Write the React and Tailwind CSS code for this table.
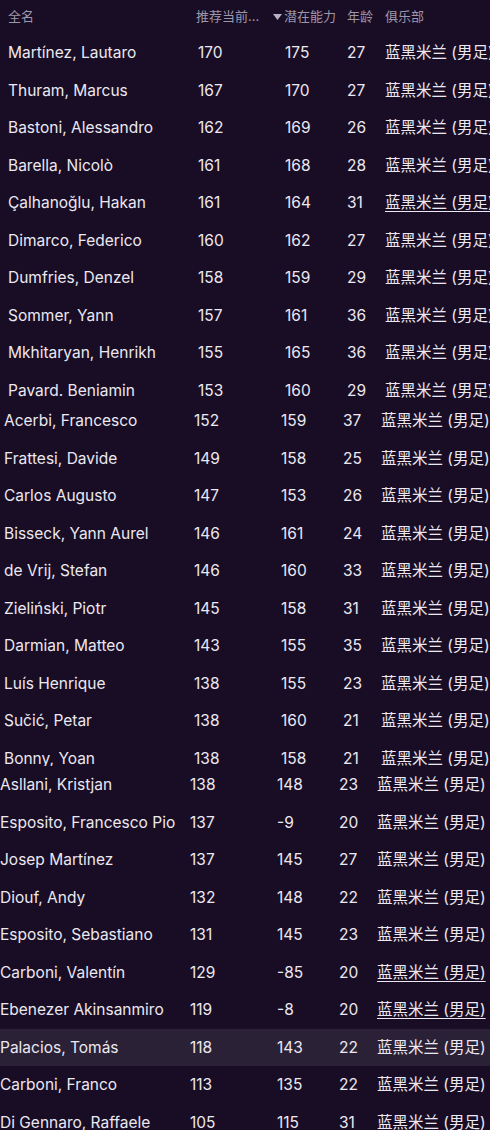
const font = { fontFamily: "Inter, 'Noto Sans CJK SC', sans-serif" }

const segments = [
  {
    pad: 'pl-2',
    height: 'h-[402px]',
    rows: [
      ['Martínez, Lautaro', 170, 175, 27],
      ['Thuram, Marcus', 167, 170, 27],
      ['Bastoni, Alessandro', 162, 169, 26],
      ['Barella, Nicolò', 161, 168, 28],
      ['Çalhanoğlu, Hakan', 161, 164, 31, { link: true }],
      ['Dimarco, Federico', 160, 162, 27],
      ['Dumfries, Denzel', 158, 159, 29],
      ['Sommer, Yann', 157, 161, 36],
      ['Mkhitaryan, Henrikh', 155, 165, 36],
      ['Pavard. Beniamin', 153, 160, 29],
    ],
  },
  {
    pad: 'pl-1',
    height: 'h-[364px]',
    rows: [
      ['Acerbi, Francesco', 152, 159, 37],
      ['Frattesi, Davide', 149, 158, 25],
      ['Carlos Augusto', 147, 153, 26],
      ['Bisseck, Yann Aurel', 146, 161, 24],
      ['de Vrij, Stefan', 146, 160, 33],
      ['Zieliński, Piotr', 145, 158, 31],
      ['Darmian, Matteo', 143, 155, 35],
      ['Luís Henrique', 138, 155, 23],
      ['Sučić, Petar', 138, 160, 21],
      ['Bonny, Yoan', 138, 158, 21],
    ],
  },
  {
    pad: 'pl-0',
    height: 'h-[364px]',
    rows: [
      ['Asllani, Kristjan', 138, 148, 23],
      ['Esposito, Francesco Pio', 137, -9, 20],
      ['Josep Martínez', 137, 145, 27],
      ['Diouf, Andy', 132, 148, 22],
      ['Esposito, Sebastiano', 131, 145, 23],
      ['Carboni, Valentín', 129, -85, 20, { link: true }],
      ['Ebenezer Akinsanmiro', 119, -8, 20, { link: true }],
      ['Palacios, Tomás', 118, 143, 22, { active: true }],
      ['Carboni, Franco', 113, 135, 22],
      ['Di Gennaro, Raffaele', 105, 115, 31],
    ],
  },
]

const grid = 'grid grid-cols-[190px_87px_62px_38px_auto] items-center whitespace-nowrap'

function Row({ name, ca, pa, age, opts = {} }) {
  return (
    <div
      className={`${grid} h-[37.5px] shrink-0 text-[15.5px] text-[#ece8f1] ${
        opts.active ? 'bg-[#2a2136]' : ''
      }`}
    >
      <span>{name}</span>
      <span>{ca}</span>
      <span>{pa}</span>
      <span>{age}</span>
      <span className={`text-[15.5px] ${opts.link ? 'underline underline-offset-[3px]' : ''}`}>
        蓝黑米兰 (男足)
      </span>
    </div>
  )
}

export default function App() {
  return (
    <div className="w-[490px] h-[1132px] overflow-hidden bg-white" style={font}>
      {segments.map((seg, i) => (
        <div key={i} className={`${seg.height} overflow-hidden bg-[#180d24] flex flex-col ${seg.pad}`}>
          {i === 0 && (
            <div className={`${grid} h-[34px] shrink-0 text-[13px] text-[#9e96aa]`}>
              <span>全名</span>
              <span className="-ml-0.5">推荐当前...</span>
              <span className="-ml-3 flex items-center gap-0.5">
                <svg width="9" height="6" viewBox="0 0 9 6" className="fill-[#b8b1c2]">
                  <path d="M0 0h9L4.5 6z" />
                </svg>
                潜在能力
              </span>
              <span>年龄</span>
              <span>俱乐部</span>
            </div>
          )}
          {seg.rows.map(([name, ca, pa, age, opts]) => (
            <Row key={name} name={name} ca={ca} pa={pa} age={age} opts={opts} />
          ))}
        </div>
      ))}
    </div>
  )
}
